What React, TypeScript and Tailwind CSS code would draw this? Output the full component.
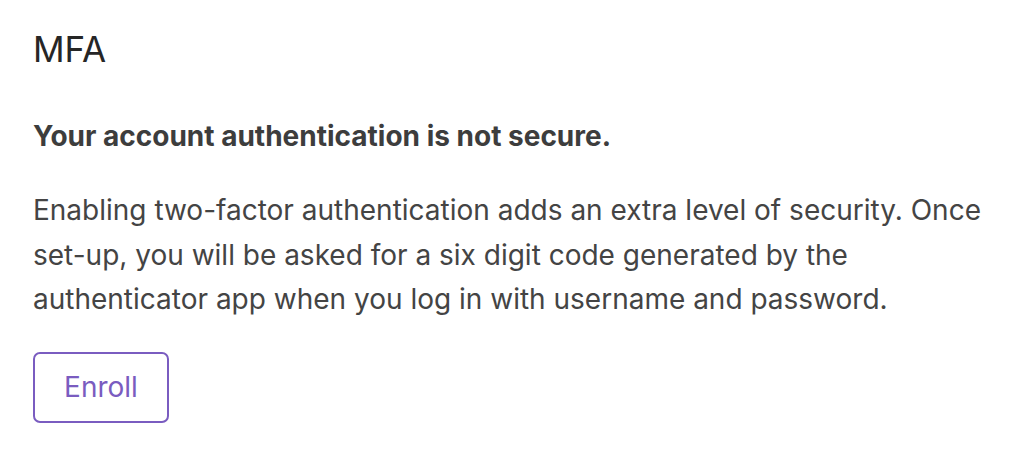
export default function App() {
  return (
    <div className="w-[1020px] h-[462px] bg-white font-['Inter',sans-serif] px-[33px] pt-[29px]">
      <h2 className="text-[35px] leading-[40px] text-[#262626] font-normal">MFA</h2>
      <p className="mt-[51px] text-[28px] leading-[32px] font-bold text-[#3d3d3d]">
        Your account authentication is not secure.
      </p>
      <p className="mt-[36px] text-[28px] leading-[44.5px] text-[#444] w-[960px]">
        Enabling two-factor authentication adds an extra level of security. Once set-up, you will be asked for a six digit code generated by the authenticator app when you log in with username and password.
      </p>
      <button
        type="button"
        className="mt-[30px] w-[136px] h-[71px] rounded-[7px] border-2 border-[#7a5cc0] text-[#7a5cc0] text-[28px] bg-white"
      >
        Enroll
      </button>
    </div>
  );
}
